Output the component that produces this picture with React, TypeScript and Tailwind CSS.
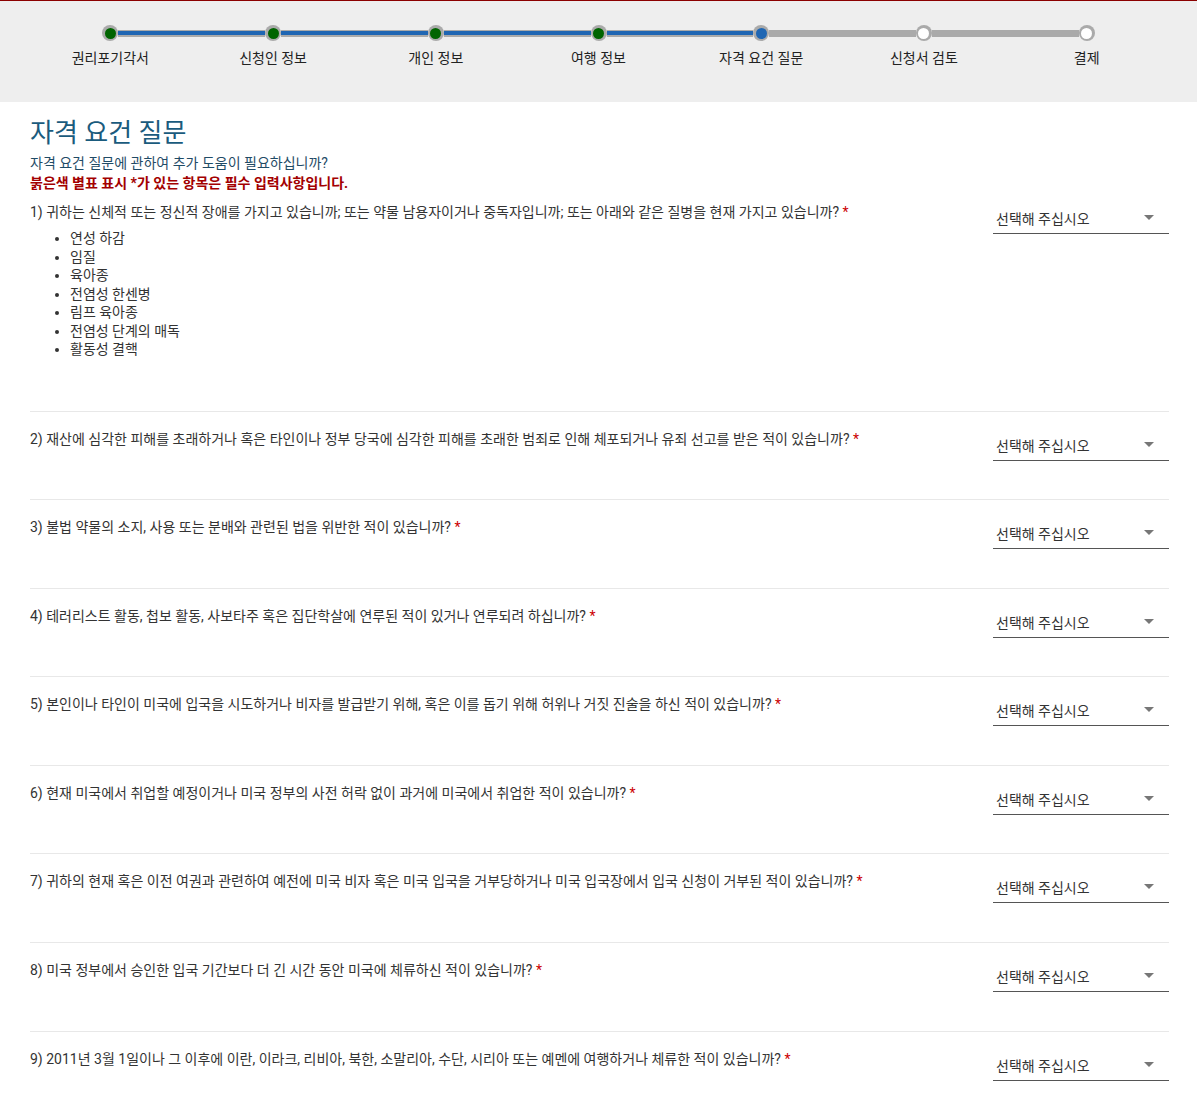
import React from "react";

const steps = [
  "권리포기각서",
  "신청인 정보",
  "개인 정보",
  "여행 정보",
  "자격 요건 질문",
  "신청서 검토",
  "결제",
];
const current = 4;

const diseases = [
  "연성 하감",
  "임질",
  "육아종",
  "전염성 한센병",
  "림프 육아종",
  "전염성 단계의 매독",
  "활동성 결핵",
];

const questions = [
  "2) 재산에 심각한 피해를 초래하거나 혹은 타인이나 정부 당국에 심각한 피해를 초래한 범죄로 인해 체포되거나 유죄 선고를 받은 적이 있습니까?",
  "3) 불법 약물의 소지, 사용 또는 분배와 관련된 법을 위반한 적이 있습니까?",
  "4) 테러리스트 활동, 첩보 활동, 사보타주 혹은 집단학살에 연루된 적이 있거나 연루되려 하십니까?",
  "5) 본인이나 타인이 미국에 입국을 시도하거나 비자를 발급받기 위해, 혹은 이를 돕기 위해 허위나 거짓 진술을 하신 적이 있습니까?",
  "6) 현재 미국에서 취업할 예정이거나 미국 정부의 사전 허락 없이 과거에 미국에서 취업한 적이 있습니까?",
  "7) 귀하의 현재 혹은 이전 여권과 관련하여 예전에 미국 비자 혹은 미국 입국을 거부당하거나 미국 입국장에서 입국 신청이 거부된 적이 있습니까?",
  "8) 미국 정부에서 승인한 입국 기간보다 더 긴 시간 동안 미국에 체류하신 적이 있습니까?",
  "9) 2011년 3월 1일이나 그 이후에 이란, 이라크, 리비아, 북한, 소말리아, 수단, 시리아 또는 예멘에 여행하거나 체류한 적이 있습니까?",
];

function Segment({ kind }: { kind: "none" | "done" | "todo" }) {
  if (kind === "none") return <div className="flex-1" />;
  return (
    <div className="flex-1 h-[7px] bg-[#aaaaaa] flex items-center">
      {kind === "done" && <div className="h-[4px] w-full bg-[#1f66b3]" />}
    </div>
  );
}

function Stepper() {
  return (
    <div className="grid grid-cols-7 px-[29px] pt-[24px]">
      {steps.map((label, i) => {
        const left = i === 0 ? "none" : i <= current ? "done" : "todo";
        const right =
          i === steps.length - 1 ? "none" : i < current ? "done" : "todo";
        const dot =
          i < current ? "bg-[#006400]" : i === current ? "bg-[#1f66b3]" : "bg-white";
        return (
          <div key={label} className="flex flex-col">
            <div className="flex items-center h-[16px]">
              <Segment kind={left} />
              <div className="w-[16px] h-[16px] rounded-full bg-[#aaaaaa] flex items-center justify-center shrink-0">
                <div className={`w-[11px] h-[11px] rounded-full ${dot}`} />
              </div>
              <Segment kind={right} />
            </div>
            <div className="mt-[7px] text-center text-[14px] leading-[20px] text-[#222]">
              {label}
            </div>
          </div>
        );
      })}
    </div>
  );
}

function Select() {
  return (
    <div className="w-[176px] shrink-0 mt-[5px] h-[26px] pt-[2px] border-b border-[#555] flex items-start justify-between pl-[3px] pr-[15px]">
      <span className="text-[14px] leading-[18px] text-[#333]">선택해 주십시오</span>
      <span className="mt-[5px] w-0 h-0 border-l-[5px] border-r-[5px] border-t-[5px] border-l-transparent border-r-transparent border-t-[#777]" />
    </div>
  );
}

function QuestionText({ text }: { text: string }) {
  return (
    <div className="text-[14px] leading-[18px] text-[#333]">
      {text}
      <span className="text-[#cc0000]"> *</span>
    </div>
  );
}

export default function App() {
  return (
    <div
      className="min-h-screen bg-white"
      style={{ fontFamily: 'Roboto, "Noto Sans CJK KR", sans-serif' }}
    >
      <div className="h-[102px] bg-[#eeeeee] border-t border-[#8b0000]">
        <Stepper />
      </div>

      <div className="ml-[30px] w-[1139px]">
        <h1 className="mt-[17px] text-[26px] leading-[28px] text-[#1a5b7d]">
          자격 요건 질문
        </h1>
        <p className="mt-[6px] text-[14px] leading-[20px] text-[#1f4b66]">
          자격 요건 질문에 관하여 추가 도움이 필요하십니까?
        </p>
        <p className="text-[14px] leading-[20px] font-bold text-[#a30000]">
          붉은색 별표 표시 *가 있는 항목은 필수 입력사항입니다.
        </p>

        <div className="flex justify-between gap-6 pt-[10px] pb-[52px]">
          <div className="flex-1">
            <QuestionText text="1) 귀하는 신체적 또는 정신적 장애를 가지고 있습니까; 또는 약물 남용자이거나 중독자입니까; 또는 아래와 같은 질병을 현재 가지고 있습니까?" />
            <ul className="mt-[8px] list-disc pl-[40px] text-[14px] leading-[18.5px] text-[#333]">
              {diseases.map((d) => (
                <li key={d}>{d}</li>
              ))}
            </ul>
          </div>
          <Select />
        </div>

        {questions.map((q) => (
          <div
            key={q}
            className="flex justify-between gap-6 border-t border-[#e8e8e8] pt-[18px] h-[88.6px]"
          >
            <div className="flex-1">
              <QuestionText text={q} />
            </div>
            <Select />
          </div>
        ))}
      </div>
    </div>
  );
}
